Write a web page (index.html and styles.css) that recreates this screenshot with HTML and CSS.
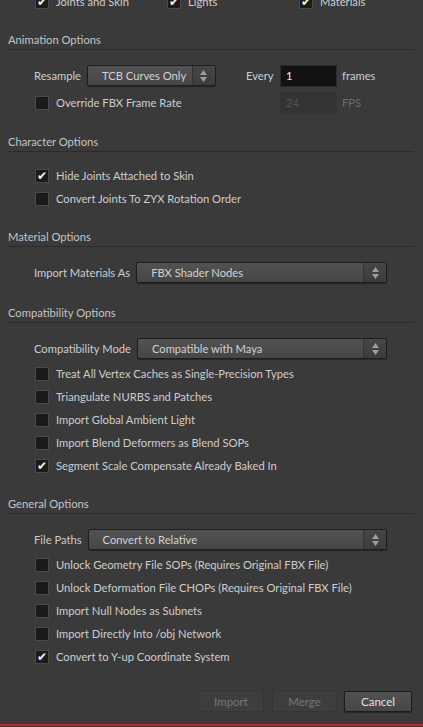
FILE: index.html
```html
<!DOCTYPE html>
<html lang="en">
<head>
    <meta charset="UTF-8">
    <title>FBX Import Options</title>
    <link rel="stylesheet" href="styles.css">
</head>
<body>
<div class="dialog">

    <!-- import what: scrolled partly out of view -->
    <div class="section first">
        <div class="body">
            <div class="row three">
                <label class="check"><span class="box on"></span>Joints and Skin</label>
                <label class="check"><span class="box on"></span>Lights</label>
                <label class="check"><span class="box on"></span>Materials</label>
            </div>
        </div>
    </div>

    <div class="section tight">
        <div class="head">Animation Options</div>
        <div class="body anim">
            <div class="field">
                <span class="lbl">Resample</span>
                <div class="select short">
                    <span class="val">TCB Curves Only</span>
                    <span class="arrows"><svg width="7" height="12" viewBox="0 0 7 12"><path d="M3.5 0L7 5H0z M0 7h7L3.5 12z" fill="#9c9c9c"/></svg></span>
                </div>
            </div>
            <span class="lbl">Every</span>
            <div class="num">1</div>
            <span class="unit">frames</span>

            <label class="check"><span class="box"></span>Override FBX Frame Rate</label>
            <span></span>
            <div class="num off">24</div>
            <span class="unit off">FPS</span>
        </div>
    </div>

    <div class="section">
        <div class="head">Character Options</div>
        <div class="body">
            <div class="row"><label class="check"><span class="box on"></span>Hide Joints Attached to Skin</label></div>
            <div class="row"><label class="check"><span class="box"></span>Convert Joints To ZYX Rotation Order</label></div>
        </div>
    </div>

    <div class="section">
        <div class="head">Material Options</div>
        <div class="body">
            <div class="row drop">
                <span class="lbl">Import Materials As</span>
                <div class="select">
                    <span class="val">FBX Shader Nodes</span>
                    <span class="arrows"><svg width="7" height="12" viewBox="0 0 7 12"><path d="M3.5 0L7 5H0z M0 7h7L3.5 12z" fill="#9c9c9c"/></svg></span>
                </div>
            </div>
        </div>
    </div>

    <div class="section">
        <div class="head">Compatibility Options</div>
        <div class="body">
            <div class="row drop">
                <span class="lbl">Compatibility Mode</span>
                <div class="select">
                    <span class="val">Compatible with Maya</span>
                    <span class="arrows"><svg width="7" height="12" viewBox="0 0 7 12"><path d="M3.5 0L7 5H0z M0 7h7L3.5 12z" fill="#9c9c9c"/></svg></span>
                </div>
            </div>
            <div class="row"><label class="check"><span class="box"></span>Treat All Vertex Caches as Single-Precision Types</label></div>
            <div class="row"><label class="check"><span class="box"></span>Triangulate NURBS and Patches</label></div>
            <div class="row"><label class="check"><span class="box"></span>Import Global Ambient Light</label></div>
            <div class="row"><label class="check"><span class="box"></span>Import Blend Deformers as Blend SOPs</label></div>
            <div class="row"><label class="check"><span class="box on"></span>Segment Scale Compensate Already Baked In</label></div>
        </div>
    </div>

    <div class="section">
        <div class="head">General Options</div>
        <div class="body">
            <div class="row drop">
                <span class="lbl">File Paths</span>
                <div class="select">
                    <span class="val">Convert to Relative</span>
                    <span class="arrows"><svg width="7" height="12" viewBox="0 0 7 12"><path d="M3.5 0L7 5H0z M0 7h7L3.5 12z" fill="#9c9c9c"/></svg></span>
                </div>
            </div>
            <div class="row"><label class="check"><span class="box"></span>Unlock Geometry File SOPs (Requires Original FBX File)</label></div>
            <div class="row"><label class="check"><span class="box"></span>Unlock Deformation File CHOPs (Requires Original FBX File)</label></div>
            <div class="row"><label class="check"><span class="box"></span>Import Null Nodes as Subnets</label></div>
            <div class="row"><label class="check"><span class="box"></span>Import Directly Into /obj Network</label></div>
            <div class="row"><label class="check"><span class="box on"></span>Convert to Y-up Coordinate System</label></div>
        </div>
    </div>

    <div class="buttons">
        <button class="btn import" disabled>Import</button>
        <button class="btn merge" disabled>Merge</button>
        <button class="btn cancel">Cancel</button>
    </div>
</div>
</body>
</html>
```

FILE: styles.css
```css
html, body {
    margin: 0;
    background: #3a3a3a;
}

body {
    width: 423px;
    height: 727px;
    overflow: hidden;
    font-family: Lato, "Liberation Sans", sans-serif;
    font-size: 11.2px;
    color: #cdcdcd;
}

.dialog {
    height: 724px;
    display: flex;
    flex-direction: column;
    border-bottom: 2px solid #cc2229;
}

.section {
    padding-bottom: 18px;
}

.section.tight {
    padding-bottom: 17px;
}

.section.first {
    margin-top: -10px;
}

.section.first .body {
    padding-top: 0;
}

.head {
    margin: 0 9px 0 8px;
    height: 18px;
    line-height: 18px;
    border-bottom: 1px solid #2b2b2b;
    color: #c4c4c4;
}

.body {
    padding: 12px 0 0 34px;
}

.row {
    height: 23px;
    display: flex;
    align-items: center;
}

.row.drop {
    height: 27px;
    margin-right: 36px;
}

.row.three {
    display: grid;
    grid-template-columns: 132px 132px 132px;
    align-items: center;
}

/* checkboxes */
.check {
    display: flex;
    align-items: center;
    white-space: nowrap;
}

.box {
    width: 12px;
    height: 12px;
    margin: 0 7px 0 1px;
    border: 1px solid #4a4a4a;
    background: #1b1b1b;
    display: flex;
    align-items: center;
    justify-content: center;
}

.box.on:after {
    content: "\2714";
    font-family: "DejaVu Sans", sans-serif;
    font-size: 12px;
    line-height: 12px;
    color: #f2f2f2;
}

/* label + menu pairs */
.field {
    display: flex;
    align-items: center;
}

.lbl {
    white-space: nowrap;
    margin-right: 6px;
}

.select {
    flex: 1;
    display: flex;
    height: 21px;
    box-sizing: border-box;
    border: 1px solid #1e1e1e;
    border-radius: 2px;
    background: linear-gradient(#525252, #464646);
    box-shadow: 0 1px 1px rgba(0, 0, 0, .35);
    overflow: hidden;
}

.select.short {
    flex: none;
    width: 129px;
}

.select .val {
    flex: 1;
    padding-left: 14px;
    line-height: 19px;
    color: #d2d2d2;
    white-space: nowrap;
}

.select .arrows {
    width: 22px;
    border-left: 1px solid #333;
    background: linear-gradient(#464646, #3c3c3c);
    display: flex;
    align-items: center;
    justify-content: center;
}

/* animation grid: resample / frame rate */
.anim {
    display: grid;
    grid-template-columns: 212px 34px 57px auto;
    grid-auto-rows: 27px;
    align-items: center;
}

.num {
    height: 22px;
    box-sizing: border-box;
    padding-left: 5px;
    line-height: 20px;
    background: #121212;
    border: 1px solid #2c2c2c;
    color: #f4f4f4;
}

.num.off {
    background: #343434;
    border-color: #343434;
    color: #525252;
}

.unit {
    padding-left: 5px;
}

.unit.off {
    color: #6c6c6c;
}

/* dialog buttons */
.buttons {
    margin-top: auto;
    display: flex;
    justify-content: flex-end;
    gap: 8px;
    padding: 0 11px 12px 0;
}

.btn {
    height: 21px;
    padding: 0;
    font-family: inherit;
    font-size: 11.5px;
    border-radius: 2px;
    box-sizing: border-box;
}

.btn.import { width: 66px; }
.btn.merge { width: 65px; margin-right: -1px; }
.btn.cancel { width: 68px; }

.btn:disabled {
    background: #3e3e3e;
    border: 1px solid #363636;
    color: #767676;
}

.btn.cancel {
    background: linear-gradient(#525252, #464646);
    border: 1px solid #1d1d1d;
    box-shadow: 0 1px 1px rgba(0, 0, 0, .35);
    color: #e2e2e2;
}
```
